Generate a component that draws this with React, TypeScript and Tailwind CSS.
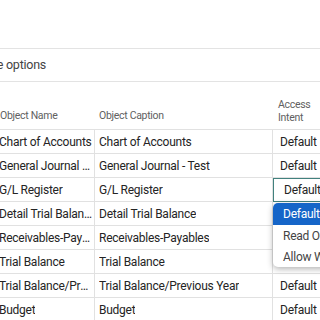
import { useState } from 'react'

type IRow = {
  name: string
  caption: string
  intent: string
}

const ROWS: IRow[] = [
  { name: 'Chart of Accounts', caption: 'Chart of Accounts', intent: 'Default' },
  { name: 'General Journal - Test', caption: 'General Journal - Test', intent: 'Default' },
  { name: 'G/L Register', caption: 'G/L Register', intent: 'Default' },
  { name: 'Detail Trial Balance', caption: 'Detail Trial Balance', intent: 'Default' },
  { name: 'Receivables-Payables', caption: 'Receivables-Payables', intent: 'Default' },
  { name: 'Trial Balance', caption: 'Trial Balance', intent: 'Default' },
  { name: 'Trial Balance/Previous Year', caption: 'Trial Balance/Previous Year', intent: 'Default' },
  { name: 'Budget', caption: 'Budget', intent: 'Default' },
]

const OPTIONS = ['Default', 'Read Only', 'Allow Write']

export default function App() {
  const [active] = useState(2)

  return (
    <div
      className="w-[320px] h-[320px] overflow-hidden bg-white text-[#242424] text-[12px] tracking-[-0.25px]"
      style={{ fontFamily: '"Segoe UI", Roboto, sans-serif' }}
    >
      <div className="h-[48px]" />
      <div className="h-[34px] border-y border-[#e3e3e3] flex items-center">
        <div className="w-[46px] flex justify-end whitespace-nowrap text-[#444] text-[12.5px]">
          More options
        </div>
      </div>

      <div className="relative">
        <div className="-ml-[4px] w-[400px]">
          {/* header */}
          <div className="h-[48px] flex border-b border-[#e1e1e1] text-[#616161] text-[10.5px] tracking-[-0.3px]">
            <div className="w-[99px] px-[4px] flex items-end pb-[5px]">Object Name</div>
            <div className="w-[178px] px-[4px] flex items-end pb-[5px]">Object Caption</div>
            <div className="flex-1 px-[5px] flex flex-col justify-end pb-[5px] leading-[13px]">
              <div>Access</div>
              <div>Intent</div>
            </div>
          </div>

          {ROWS.map((r, i) => (
            <div key={i} className="h-[24px] flex border-b border-[#e1e1e1]">
              <div className="w-[99px] pl-[3px] pr-[1px] flex items-center border-r border-[#e1e1e1]">
                <span className="truncate">{ r.name }</span>
              </div>
              <div className="w-[178px] px-[4px] flex items-center border-r border-[#e1e1e1]">
                <span className="truncate">{ r.caption }</span>
              </div>
              <div className="flex-1 flex items-center">
                { i === active ? (
                  <div className="h-[24px] w-full border border-[#41817e] flex items-center pl-[10px] -mb-px">
                    { r.intent }
                  </div>
                ) : (
                  <div className="pl-[7px]">{ r.intent }</div>
                ) }
              </div>
            </div>
          ))}
        </div>

        {/* dropdown */}
        <div className="absolute left-[273px] top-[121px] w-[110px] bg-white rounded-[5px] shadow-[0_2px_6px_rgba(0,0,0,0.3)] overflow-hidden">
          { OPTIONS.map((o, i) => (
            <div
              key={o}
              className={i === 0
                ? 'h-[22px] flex items-center pl-[10px] bg-[#1565c8] text-white'
                : 'h-[21px] flex items-center pl-[10px] text-[#444]'}
            >
              { o }
            </div>
          )) }
        </div>
      </div>
    </div>
  )
}
